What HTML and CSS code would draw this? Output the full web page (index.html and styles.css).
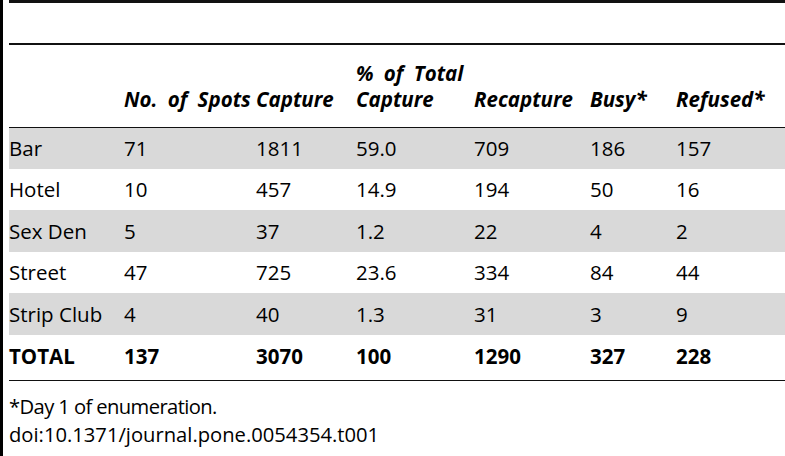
FILE: index.html
```html
<!DOCTYPE html>
<html>
<head>
<meta charset="utf-8">
<link rel="stylesheet" href="styles.css">
</head>
<body>
<div class="frame">
  <div class="inner">
    <div class="top-rule"></div>
    <div class="title-space"></div>
    <div class="table-wrap">
      <table class="data">
        <colgroup>
          <col class="c1"><col class="c2"><col class="c3"><col class="c4"><col class="c5"><col class="c6"><col class="c7">
        </colgroup>
        <thead>
          <tr>
            <th></th>
            <th>No. of Spots</th>
            <th>Capture</th>
            <th>% of Total<br>Capture</th>
            <th>Recapture</th>
            <th>Busy*</th>
            <th>Refused*</th>
          </tr>
        </thead>
        <tbody>
          <tr class="shade"><td>Bar</td><td>71</td><td>1811</td><td>59.0</td><td>709</td><td>186</td><td>157</td></tr>
          <tr><td>Hotel</td><td>10</td><td>457</td><td>14.9</td><td>194</td><td>50</td><td>16</td></tr>
          <tr class="shade"><td>Sex Den</td><td>5</td><td>37</td><td>1.2</td><td>22</td><td>4</td><td>2</td></tr>
          <tr><td>Street</td><td>47</td><td>725</td><td>23.6</td><td>334</td><td>84</td><td>44</td></tr>
          <tr class="shade"><td>Strip Club</td><td>4</td><td>40</td><td>1.3</td><td>31</td><td>3</td><td>9</td></tr>
          <tr class="total"><td>TOTAL</td><td>137</td><td>3070</td><td>100</td><td>1290</td><td>327</td><td>228</td></tr>
        </tbody>
      </table>
    </div>
    <div class="notes">
      <p class="note-star">*Day 1 of enumeration.</p>
      <p class="note-doi">doi:10.1371/journal.pone.0054354.t001</p>
    </div>
  </div>
</div>
</body>
</html>
```

FILE: styles.css
```css
html, body {
  margin: 0;
  padding: 0;
  background: #ffffff;
}

body {
  font-family: "Open Sans", "Noto Sans", sans-serif;
  font-size: 20.5px;
  color: #000000;
  width: 785px;
  height: 456px;
  overflow: hidden;
}

.frame {
  border-left: 3px solid #000000;
  height: 456px;
  box-sizing: border-box;
}

.inner {
  padding-left: 6px;
}

.top-rule {
  height: 3px;
  background: #111111;
}

.title-space {
  height: 40px;
}

.table-wrap {
  border-top: 2px solid #111111;
  border-bottom: 1.5px solid #111111;
  padding-bottom: 3.5px;
}

.data {
  border-collapse: collapse;
  table-layout: fixed;
  width: 776px;
}

.c1 { width: 115px; }
.c2 { width: 132px; }
.c3 { width: 100px; }
.c4 { width: 118px; }
.c5 { width: 116px; }
.c6 { width: 86px; }
.c7 { width: 109px; }

.data th {
  font-weight: 700;
  font-style: italic;
  text-align: left;
  vertical-align: bottom;
  white-space: nowrap;
  line-height: 26px;
  height: 82px;
  padding: 0 0 15px 0;
  box-sizing: border-box;
  border-bottom: 1.5px solid #111111;
  word-spacing: 5px;
}

.data td {
  text-align: left;
  vertical-align: middle;
  white-space: nowrap;
  line-height: 24px;
  height: 41.5px;
  padding: 0;
  box-sizing: border-box;
}

.data tr.shade td {
  background: #d9d9d9;
}

.data tr.total td {
  font-weight: 700;
  height: 42px;
}

.notes {
  padding-top: 12px;
  font-size: 20.2px;
}

.notes p {
  margin: 0;
  line-height: 27.5px;
}

.note-star {
  letter-spacing: -0.6px;
}

.note-doi {
  margin-top: -1px;
}
```
